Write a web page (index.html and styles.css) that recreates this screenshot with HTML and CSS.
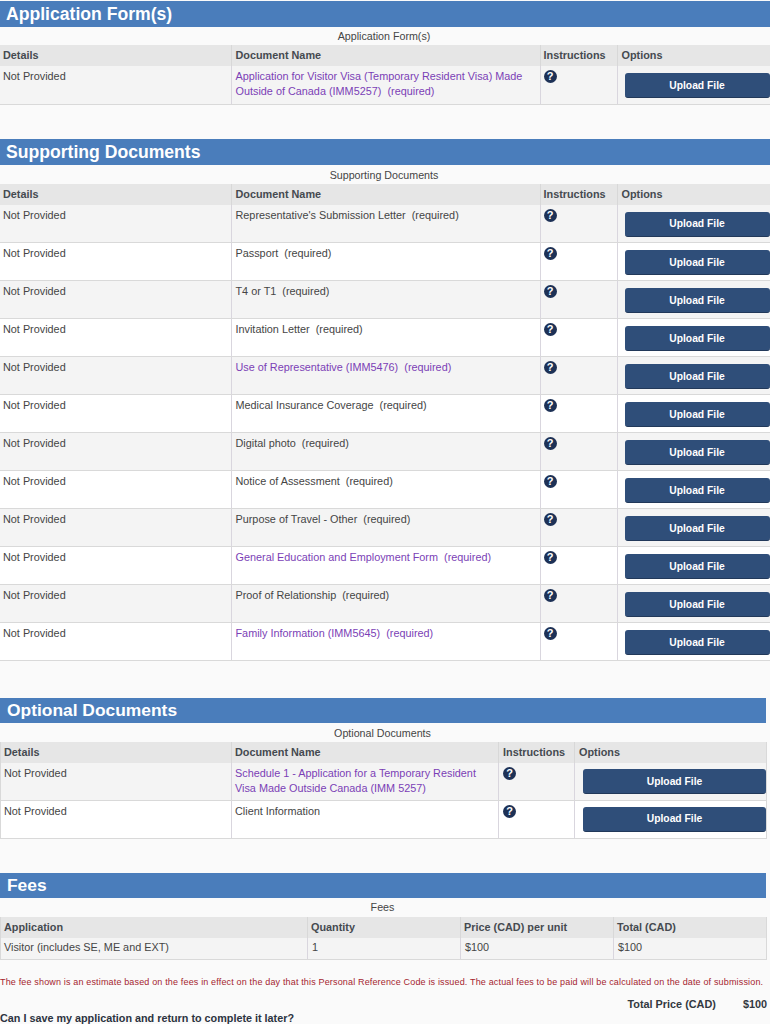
FILE: index.html
```html
<!DOCTYPE html>
<html lang="en">
<head>
<meta charset="utf-8">
<title>Application documents</title>
<link rel="stylesheet" href="styles.css">
</head>
<body>
<section class="section s-app">
  <h2 class="bar">Application Form(s)</h2>
  <table class="docs">
    <caption>Application Form(s)</caption>
    <colgroup><col class="c1"><col class="c2"><col class="c3"><col class="c4"></colgroup>
    <thead><tr><th>Details</th><th>Document Name</th><th>Instructions</th><th>Options</th></tr></thead>
    <tbody>
      <tr><td>Not Provided</td><td><a class="link">Application for Visitor Visa (Temporary Resident Visa) Made Outside of Canada (IMM5257)</a>&nbsp; <span class="req-link">(required)</span></td><td><span class="help">?</span></td><td class="opt"><button class="upload">Upload File</button></td></tr>
    </tbody>
  </table>
</section>

<section class="section s-sup">
  <h2 class="bar">Supporting Documents</h2>
  <table class="docs">
    <caption>Supporting Documents</caption>
    <colgroup><col class="c1"><col class="c2"><col class="c3"><col class="c4"></colgroup>
    <thead><tr><th>Details</th><th>Document Name</th><th>Instructions</th><th>Options</th></tr></thead>
    <tbody>
      <tr><td>Not Provided</td><td>Representative's Submission Letter&nbsp; (required)</td><td><span class="help">?</span></td><td class="opt"><button class="upload">Upload File</button></td></tr>
      <tr><td>Not Provided</td><td>Passport&nbsp; (required)</td><td><span class="help">?</span></td><td class="opt"><button class="upload">Upload File</button></td></tr>
      <tr><td>Not Provided</td><td>T4 or T1&nbsp; (required)</td><td><span class="help">?</span></td><td class="opt"><button class="upload">Upload File</button></td></tr>
      <tr><td>Not Provided</td><td>Invitation Letter&nbsp; (required)</td><td><span class="help">?</span></td><td class="opt"><button class="upload">Upload File</button></td></tr>
      <tr><td>Not Provided</td><td><a class="link">Use of Representative (IMM5476)</a>&nbsp; <span class="req-link">(required)</span></td><td><span class="help">?</span></td><td class="opt"><button class="upload">Upload File</button></td></tr>
      <tr><td>Not Provided</td><td>Medical Insurance Coverage&nbsp; (required)</td><td><span class="help">?</span></td><td class="opt"><button class="upload">Upload File</button></td></tr>
      <tr><td>Not Provided</td><td>Digital photo&nbsp; (required)</td><td><span class="help">?</span></td><td class="opt"><button class="upload">Upload File</button></td></tr>
      <tr><td>Not Provided</td><td>Notice of Assessment&nbsp; (required)</td><td><span class="help">?</span></td><td class="opt"><button class="upload">Upload File</button></td></tr>
      <tr><td>Not Provided</td><td>Purpose of Travel - Other&nbsp; (required)</td><td><span class="help">?</span></td><td class="opt"><button class="upload">Upload File</button></td></tr>
      <tr><td>Not Provided</td><td><a class="link">General Education and Employment Form</a>&nbsp; <span class="req-link">(required)</span></td><td><span class="help">?</span></td><td class="opt"><button class="upload">Upload File</button></td></tr>
      <tr><td>Not Provided</td><td>Proof of Relationship&nbsp; (required)</td><td><span class="help">?</span></td><td class="opt"><button class="upload">Upload File</button></td></tr>
      <tr><td>Not Provided</td><td><a class="link">Family Information (IMM5645)</a>&nbsp; <span class="req-link">(required)</span></td><td><span class="help">?</span></td><td class="opt"><button class="upload">Upload File</button></td></tr>
    </tbody>
  </table>
</section>

<section class="section narrow s-opt">
  <h2 class="bar">Optional Documents</h2>
  <table class="docs optional">
    <caption>Optional Documents</caption>
    <colgroup><col class="o1"><col class="o2"><col class="o3"><col class="o4"></colgroup>
    <thead><tr><th>Details</th><th>Document Name</th><th>Instructions</th><th>Options</th></tr></thead>
    <tbody>
      <tr><td>Not Provided</td><td><a class="link">Schedule 1 - Application for a Temporary Resident Visa Made Outside Canada (IMM 5257)</a></td><td><span class="help">?</span></td><td class="opt"><button class="upload">Upload File</button></td></tr>
      <tr><td>Not Provided</td><td>Client Information</td><td><span class="help">?</span></td><td class="opt"><button class="upload">Upload File</button></td></tr>
    </tbody>
  </table>
</section>

<section class="section narrow s-fees">
  <h2 class="bar">Fees</h2>
  <table class="docs fees">
    <caption>Fees</caption>
    <colgroup><col class="f1"><col class="f2"><col class="f3"><col class="f4"></colgroup>
    <thead><tr><th>Application</th><th>Quantity</th><th>Price (CAD) per unit</th><th>Total (CAD)</th></tr></thead>
    <tbody>
      <tr><td>Visitor (includes SE, ME and EXT)</td><td>1</td><td>$100</td><td>$100</td></tr>
    </tbody>
  </table>
  <p class="notice">The fee shown is an estimate based on the fees in effect on the day that this Personal Reference Code is issued. The actual fees to be paid will be calculated on the date of submission.</p>
  <div class="total"><span>Total Price (CAD)</span><span>$100</span></div>
</section>
<p class="question">Can I save my application and return to complete it later?</p>
</body>
</html>
```
FILE: styles.css
```css
* { box-sizing: border-box; }
html, body { height: 1024px; overflow: hidden; }
body {
  margin: 0;
  background: #fafafa;
  color: #454545;
  font-family: "Liberation Sans", Arial, sans-serif;
  font-size: 10.85px;
  line-height: 15px;
}
.section { margin: 0; }
.s-app { padding-top: 1px; margin-bottom: 34px; }
.s-sup { margin-bottom: 37px; }
.s-opt { margin-bottom: 34px; }
.narrow { width: 766px; }
.bar {
  margin: 0;
  height: 26px;
  padding-left: 6px;
  background: #4a7dbb;
  color: #fff;
  font-size: 17.6px;
  font-weight: 700;
  line-height: 26px;
}
.narrow .bar { height: 25px; padding-left: 7px; font-size: 17.4px; line-height: 25px; }
.docs {
  width: 100%;
  table-layout: fixed;
  border-collapse: collapse;
}
caption {
  height: 19px;
  padding: 3px 2px 0 0;
  font-size: 10.7px;
  line-height: 15px;
  text-align: center;
  color: #454545;
}
.s-app caption { height: 18px; padding-top: 2px; }
.fees caption { padding-top: 2px; }
.c1 { width: 231px; } .c2 { width: 309px; } .c3 { width: 77px; } .c4 { width: 153px; }
.o1 { width: 231px; } .o2 { width: 267px; } .o3 { width: 76px; } .o4 { width: 192px; }
.f1 { width: 307px; } .f2 { width: 153px; } .f3 { width: 153px; } .f4 { width: 153px; }
th {
  height: 21px;
  padding: 0 3px;
  background: #e6e6e6;
  border-left: 1px solid #d8d8d8;
  text-align: left;
  font-weight: 700;
  color: #454a50;
}
th:first-child, td:first-child { border-left: 0; }
th:nth-child(2), th:nth-child(4) { padding-left: 4px; }
td {
  height: 38px;
  padding: 3px 4px 0 4px;
  vertical-align: top;
  border-left: 1px solid #d9d6de;
  border-bottom: 1px solid #d9d9d9;
  background: #fff;
}
td:first-child { padding-left: 3px; }
td:nth-child(3) { padding-left: 3px; }
tbody tr:nth-child(odd) td { background: #f4f4f4; }
.optional, .fees { border-left: 1px solid #d9d9d9; border-right: 1px solid #d9d9d9; }
.optional th:nth-child(2) { padding-left: 3px; }
.optional th:nth-child(3) { padding-left: 4px; }
.optional td:nth-child(2) { padding-left: 3px; }
.optional td:nth-child(3) { padding-left: 4px; }
.optional tr:first-child td { height: 37px; }
.fees th:nth-child(2), .fees th:nth-child(4) { padding-left: 3px; }
.fees td { height: 22px; padding-top: 2px; }
.fees td:nth-child(3) { padding-left: 4px; }
.link, .req-link { color: #7b3fb6; }
.help {
  display: block;
  width: 13px;
  height: 13px;
  margin-top: 1px;
  border-radius: 50%;
  background: #1d3156;
  color: #fff;
  font-size: 11px;
  font-weight: 700;
  line-height: 13px;
  text-align: center;
}
td.opt { padding: 7px 0 0 7px; }
.optional td.opt { padding: 6px 0 0 8px; }
.upload {
  display: block;
  width: 145px;
  height: 25px;
  padding: 0;
  border: 0;
  border-bottom: 1px solid #22395a;
  border-radius: 3px;
  background: #2f4e79;
  color: #fff;
  font-family: inherit;
  font-size: 10.3px;
  font-weight: 700;
}
.optional .upload { width: 183px; }
.notice {
  margin: 15px 0 0;
  color: #a5252f;
  font-size: 9px;
  letter-spacing: 0.16px;
  line-height: 15px;
  white-space: nowrap;
}
.total {
  display: flex;
  justify-content: flex-end;
  gap: 27px;
  margin: 7px -1px 0 0;
  font-weight: 700;
  color: #33383f;
}
.question {
  margin: -1px 0 0;
  font-size: 10.8px;
  font-weight: 700;
  color: #2c3340;
}
```
